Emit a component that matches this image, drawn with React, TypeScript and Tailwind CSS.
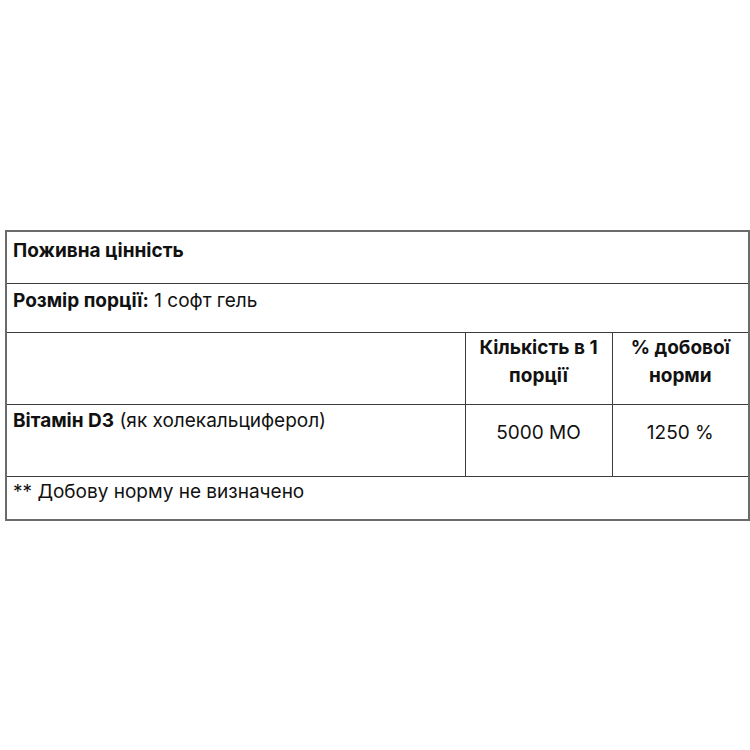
const font = { fontFamily: "Inter, 'Noto Sans', sans-serif" };

const cell = "border border-[#3c3c3c] align-top";

export default function App() {
  return (
    <div className="min-h-[750px] w-[750px] bg-white pt-[230px] pl-[5px] text-[#111]" style={font}>
      <table className="w-[743px] table-fixed border-collapse border-2 border-[#6b6b6b] text-[19px] leading-[28px]">
        <colgroup>
          <col className="w-[459px]" />
          <col className="w-[147px]" />
          <col className="w-[137px]" />
        </colgroup>
        <tbody>
          <tr className="h-[52px]">
            <td colSpan={3} className={`${cell} px-[6px] pt-[5px] font-bold`}>
              Поживна цінність
            </td>
          </tr>
          <tr className="h-[49px]">
            <td colSpan={3} className={`${cell} px-[6px] pt-[3px]`}>
              <span className="font-bold">Розмір порції:</span> 1 софт гель
            </td>
          </tr>
          <tr className="h-[72px]">
            <td className={cell}></td>
            <td className={`${cell} pt-[1px] text-center font-bold`}>
              Кількість в 1 порції
            </td>
            <td className={`${cell} pt-[1px] text-center font-bold`}>
              % добової норми
            </td>
          </tr>
          <tr className="h-[72px]">
            <td className={`${cell} px-[6px] pt-[2px]`}>
              <span className="font-bold">Вітамін D3</span> (як холекальциферол)
            </td>
            <td className={`${cell} pt-[14px] text-center`}>5000 МО</td>
            <td className={`${cell} pt-[14px] text-center`}>1250 %</td>
          </tr>
          <tr className="h-[44px]">
            <td colSpan={3} className={`${cell} px-[6px] pt-[1px]`}>
              ** Добову норму не визначено
            </td>
          </tr>
        </tbody>
      </table>
    </div>
  );
}
